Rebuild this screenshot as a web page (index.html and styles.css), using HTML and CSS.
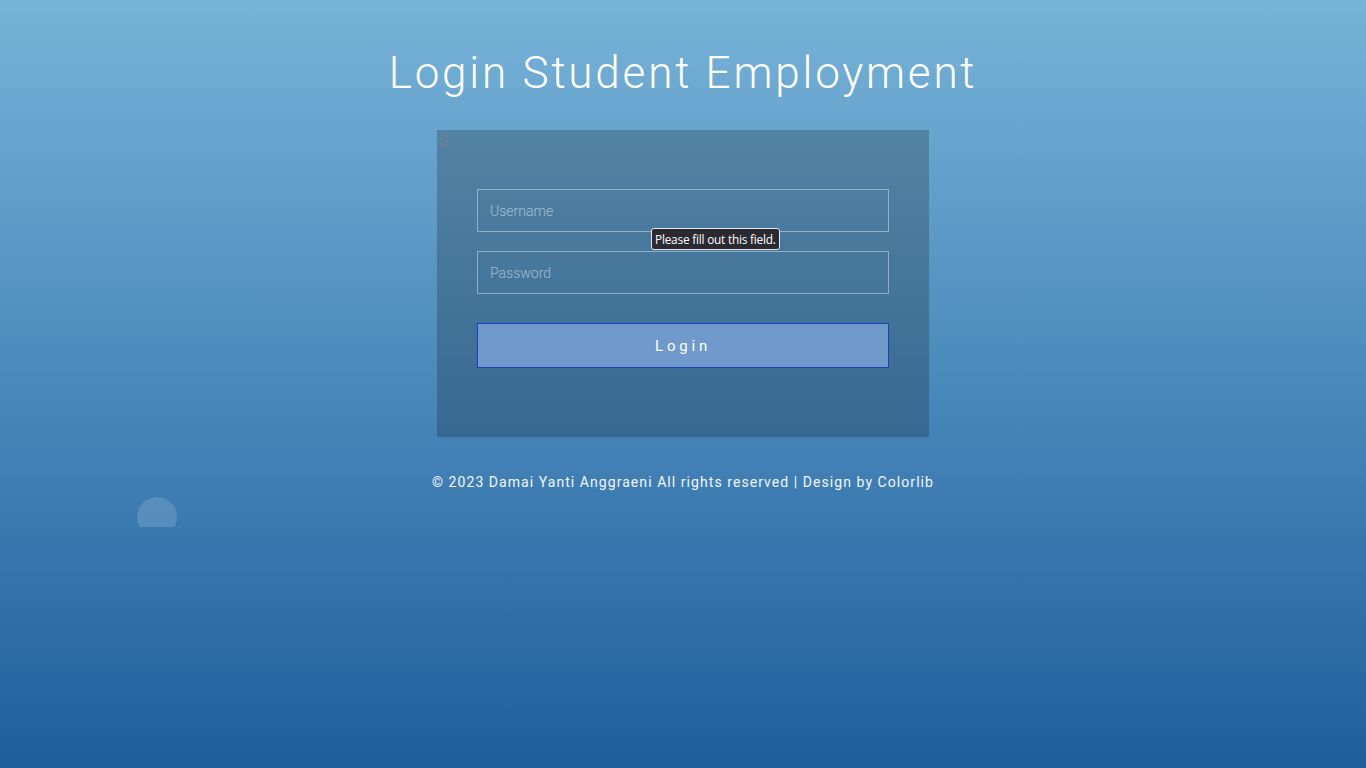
FILE: index.html
```html
<!DOCTYPE html>
<html lang="en">
<head>
<meta charset="utf-8">
<title>Login Student Employment</title>
<link rel="stylesheet" href="styles.css">
</head>
<body>
<div class="page">
  <h1 class="title">Login Student Employment</h1>
  <div class="box">
    <span class="broken">S</span>
    <form class="form">
      <div class="field">
        <input class="input" type="text" placeholder="Username">
        <div class="tip">Please fill out this field.</div>
      </div>
      <div class="field">
        <input class="input" type="password" placeholder="Password">
      </div>
      <button class="btn" type="button">Login</button>
    </form>
  </div>
  <p class="footer">© 2023 Damai Yanti Anggraeni All rights reserved | Design by Colorlib</p>
  <div class="bubble-clip"><div class="bubble"></div></div>
</div>
</body>
</html>
```
FILE: styles.css
```css
html, body {
  margin: 0;
  padding: 0;
  height: 100%;
}
body {
  background: linear-gradient(to bottom, #77b3d8 0%, #1e5e9d 100%);
  font-family: Roboto, "Liberation Sans", sans-serif;
  color: #fff;
  overflow: hidden;
}
.page {
  position: relative;
  height: 768px;
  display: flex;
  flex-direction: column;
  align-items: center;
  padding-top: 46px;
  box-sizing: border-box;
}
.title {
  margin: 0;
  font-weight: 300;
  font-size: 44px;
  line-height: 54px;
  letter-spacing: 2.8px;
  color: #fff;
}
.box {
  position: relative;
  margin-top: 30px;
  width: 492px;
  box-sizing: border-box;
  padding: 59px 40px 69px;
  background: rgba(0, 0, 0, 0.2);
}
.broken {
  position: absolute;
  left: 1px;
  top: 1px;
  font-size: 17px;
  line-height: 18px;
  color: #6f7e8c;
  font-family: Roboto, sans-serif;
}
.form {
  display: flex;
  flex-direction: column;
}
.field {
  position: relative;
  margin-bottom: 19px;
}
.field + .field {
  margin-bottom: 29px;
}
.input {
  display: block;
  width: 100%;
  height: 43px;
  box-sizing: border-box;
  border: 1px solid rgba(255, 255, 255, 0.4);
  background: transparent;
  padding: 0 12px;
  font-family: Roboto, sans-serif;
  font-weight: 300;
  font-size: 14px;
  color: #fff;
  outline: none;
}
.input::placeholder {
  color: rgba(255, 255, 255, 0.5);
}
.tip {
  position: absolute;
  left: 174px;
  top: 39px;
  height: 22px;
  box-sizing: border-box;
  padding: 0 3px;
  background: #2b2a33;
  border: 1px solid #e8e8ea;
  border-radius: 3px;
  font-family: "Open Sans", "DejaVu Sans", sans-serif;
  font-size: 11.8px;
  line-height: 21px;
  color: #fff;
  white-space: nowrap;
  letter-spacing: -0.2px;
}
.btn {
  height: 45px;
  width: 100%;
  border: 1px solid #1f3fbf;
  background: #7099cc;
  color: #fff;
  font-family: Roboto, sans-serif;
  font-size: 15px;
  letter-spacing: 3.8px;
  padding: 0;
  cursor: pointer;
}
.footer {
  margin: 35px 0 0;
  font-size: 14px;
  line-height: 20px;
  letter-spacing: 1.06px;
  color: #f2f6fa;
}
.bubble-clip {
  position: absolute;
  left: 137px;
  top: 497px;
  width: 40px;
  height: 30px;
  overflow: hidden;
}
.bubble {
  width: 40px;
  height: 40px;
  border-radius: 50%;
  background: rgba(255, 255, 255, 0.15);
}
```
